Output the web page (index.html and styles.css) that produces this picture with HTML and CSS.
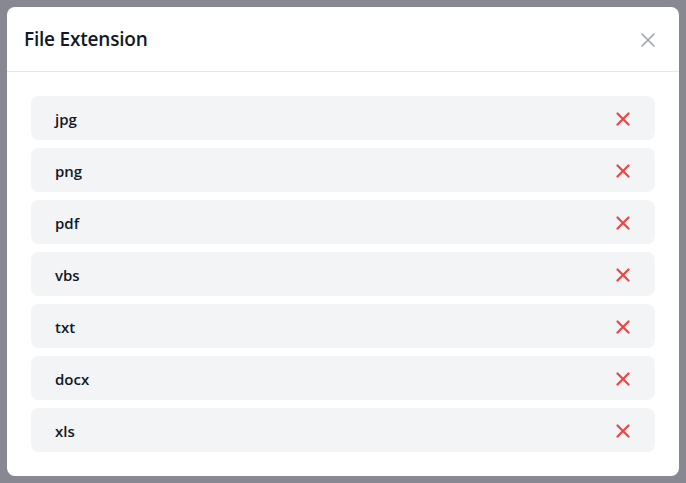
FILE: index.html
```html
<!DOCTYPE html>
<html>
<head>
<meta charset="utf-8">
<link rel="stylesheet" href="styles.css">
</head>
<body>
<div class="backdrop">
  <div class="modal">
    <div class="modal-header">
      <h2 class="title">File Extension</h2>
      <button class="close" aria-label="Close">
        <svg width="14" height="14" viewBox="0 0 14 14"><path d="M1 1L13 13M13 1L1 13" stroke="#9ca3af" stroke-width="1.6" stroke-linecap="round"/></svg>
      </button>
    </div>
    <ul class="list">
      <li class="item"><span class="ext">jpg</span><span class="remove"><svg width="14" height="14" viewBox="0 0 14 14"><path d="M1.5 1.5L12.5 12.5M12.5 1.5L1.5 12.5" stroke="#ef4444" stroke-width="2.2" stroke-linecap="round"/></svg></span></li>
      <li class="item"><span class="ext">png</span><span class="remove"><svg width="14" height="14" viewBox="0 0 14 14"><path d="M1.5 1.5L12.5 12.5M12.5 1.5L1.5 12.5" stroke="#ef4444" stroke-width="2.2" stroke-linecap="round"/></svg></span></li>
      <li class="item"><span class="ext">pdf</span><span class="remove"><svg width="14" height="14" viewBox="0 0 14 14"><path d="M1.5 1.5L12.5 12.5M12.5 1.5L1.5 12.5" stroke="#ef4444" stroke-width="2.2" stroke-linecap="round"/></svg></span></li>
      <li class="item"><span class="ext">vbs</span><span class="remove"><svg width="14" height="14" viewBox="0 0 14 14"><path d="M1.5 1.5L12.5 12.5M12.5 1.5L1.5 12.5" stroke="#ef4444" stroke-width="2.2" stroke-linecap="round"/></svg></span></li>
      <li class="item"><span class="ext">txt</span><span class="remove"><svg width="14" height="14" viewBox="0 0 14 14"><path d="M1.5 1.5L12.5 12.5M12.5 1.5L1.5 12.5" stroke="#ef4444" stroke-width="2.2" stroke-linecap="round"/></svg></span></li>
      <li class="item"><span class="ext">docx</span><span class="remove"><svg width="14" height="14" viewBox="0 0 14 14"><path d="M1.5 1.5L12.5 12.5M12.5 1.5L1.5 12.5" stroke="#ef4444" stroke-width="2.2" stroke-linecap="round"/></svg></span></li>
      <li class="item"><span class="ext">xls</span><span class="remove"><svg width="14" height="14" viewBox="0 0 14 14"><path d="M1.5 1.5L12.5 12.5M12.5 1.5L1.5 12.5" stroke="#ef4444" stroke-width="2.2" stroke-linecap="round"/></svg></span></li>
    </ul>
  </div>
</div>
</body>
</html>
```
FILE: styles.css
```css
* { box-sizing: border-box; }
html, body { margin: 0; padding: 0; }
body {
  font-family: "Open Sans", "Liberation Sans", sans-serif;
  background: #878892;
}
.backdrop {
  width: 686px;
  height: 483px;
  display: flex;
  justify-content: center;
  padding-top: 7px;
  background: #878892;
}
.modal {
  width: 672px;
  height: 469px;
  background: #fff;
  border-radius: 8px;
  display: flex;
  flex-direction: column;
}
.modal-header {
  height: 65px;
  border-bottom: 1px solid #e5e7eb;
  display: flex;
  align-items: center;
  justify-content: space-between;
  padding: 0 24px 0 17px;
}
.title {
  margin: 0;
  font-size: 19px;
  font-weight: 600;
  color: #111827;
  letter-spacing: -0.2px;
}
.close {
  background: none;
  border: 0;
  padding: 0;
  width: 14px;
  height: 14px;
  display: flex;
  margin-top: 1px;
}
.list {
  list-style: none;
  margin: 0;
  padding: 24px;
  display: flex;
  flex-direction: column;
  gap: 8px;
}
.item {
  height: 44px;
  background: #f3f4f6;
  border-radius: 8px;
  display: flex;
  align-items: center;
  justify-content: space-between;
  padding: 0 25px 0 24px;
}
.ext {
  font-size: 15px;
  font-weight: 600;
  color: #111827;
  padding-top: 2px;
}
.remove {
  display: flex;
  width: 14px;
  height: 14px;
  margin-top: 1px;
}
```
